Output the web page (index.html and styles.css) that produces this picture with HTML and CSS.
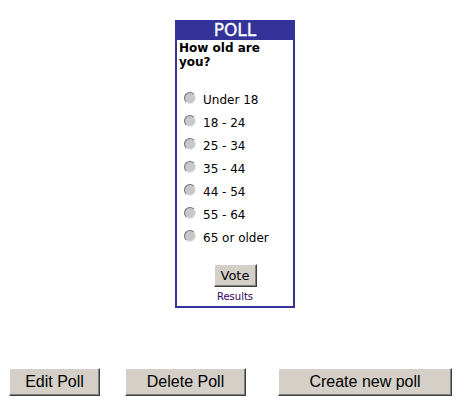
FILE: index.html
```html
<!DOCTYPE html>
<html lang="en">
<head>
  <meta charset="UTF-8" />
  <title>Poll</title>
  <link rel="stylesheet" href="styles.css">
</head>
<body>
  <!-- Poll widget -->
  <div class="poll-wrap">
    <div class="poll">
      <div class="poll-title">POLL</div>
      <div class="poll-question">How old are<br>you?</div>
      <ul class="poll-options">
        <li><span class="radio"></span>Under 18</li>
        <li><span class="radio"></span>18 - 24</li>
        <li><span class="radio"></span>25 - 34</li>
        <li><span class="radio"></span>35 - 44</li>
        <li><span class="radio"></span>44 - 54</li>
        <li><span class="radio"></span>55 - 64</li>
        <li><span class="radio"></span>65 or older</li>
      </ul>
      <div class="poll-actions">
        <button class="btn vote-btn">Vote</button>
        <a class="results-link" href="#">Results</a>
      </div>
    </div>
  </div>

  <!-- Admin buttons -->
  <div class="admin-bar">
    <button class="btn admin-btn edit-btn">Edit Poll</button>
    <button class="btn admin-btn delete-btn">Delete Poll</button>
    <button class="btn admin-btn create-btn">Create new poll</button>
  </div>
</body>
</html>
```

FILE: styles.css
```css
body {
  margin: 0;
  background: #fff;
  font-family: "DejaVu Sans", Verdana, sans-serif;
  color: #000;
}
.poll-wrap {
  padding: 20px 0 0 175px;
}
.poll {
  width: 116px;
  border: 2px solid #333399;
  border-top: 0;
}
.poll-title {
  background: #333399;
  color: #fff;
  text-align: center;
  font-size: 17px;
  line-height: 20px;
  height: 20px;
  margin: 0 -2px;
  -webkit-text-stroke: 0.3px #fff;
}
.poll-question {
  font-size: 12px;
  font-weight: bold;
  line-height: 14px;
  padding: 1px 0 0 2px;
}
.poll-options {
  list-style: none;
  margin: 0;
  padding: 19px 0 0 5px;
}
.poll-options li {
  display: flex;
  align-items: center;
  height: 23px;
  font-size: 12px;
}
.radio {
  width: 10px;
  height: 10px;
  border-radius: 50%;
  border: 1px solid;
  border-color: #707070 #e8e8e8 #e8e8e8 #707070;
  background: #c8c8c8;
  margin: -4px 7px 0 2px;
  flex: none;
}
.poll-actions {
  display: flex;
  flex-direction: column;
  align-items: center;
  padding: 15px 0 2px;
}
/* windows classic style button */
.btn {
  background: #d4d0c8;
  border: 1px solid;
  border-color: #fff #404040 #404040 #fff;
  box-shadow: inset -1px -1px 0 #808080;
  color: #000;
  padding: 0;
  margin: 0;
}
.vote-btn {
  width: 43px;
  height: 23px;
  font-family: "DejaVu Sans", Verdana, sans-serif;
  font-size: 13px;
}
.results-link {
  color: #330066;
  font-size: 10px;
  text-decoration: none;
  line-height: 14px;
  margin-top: 3px;
}
.admin-bar {
  display: flex;
  padding: 60px 0 0 9px;
}
.admin-btn {
  height: 28px;
  font-family: "Liberation Sans", Arial, sans-serif;
  font-size: 16px;
}
.edit-btn {
  width: 91px;
}
.delete-btn {
  width: 121px;
  margin-left: 25px;
}
.create-btn {
  width: 174px;
  margin-left: 32px;
}
```
